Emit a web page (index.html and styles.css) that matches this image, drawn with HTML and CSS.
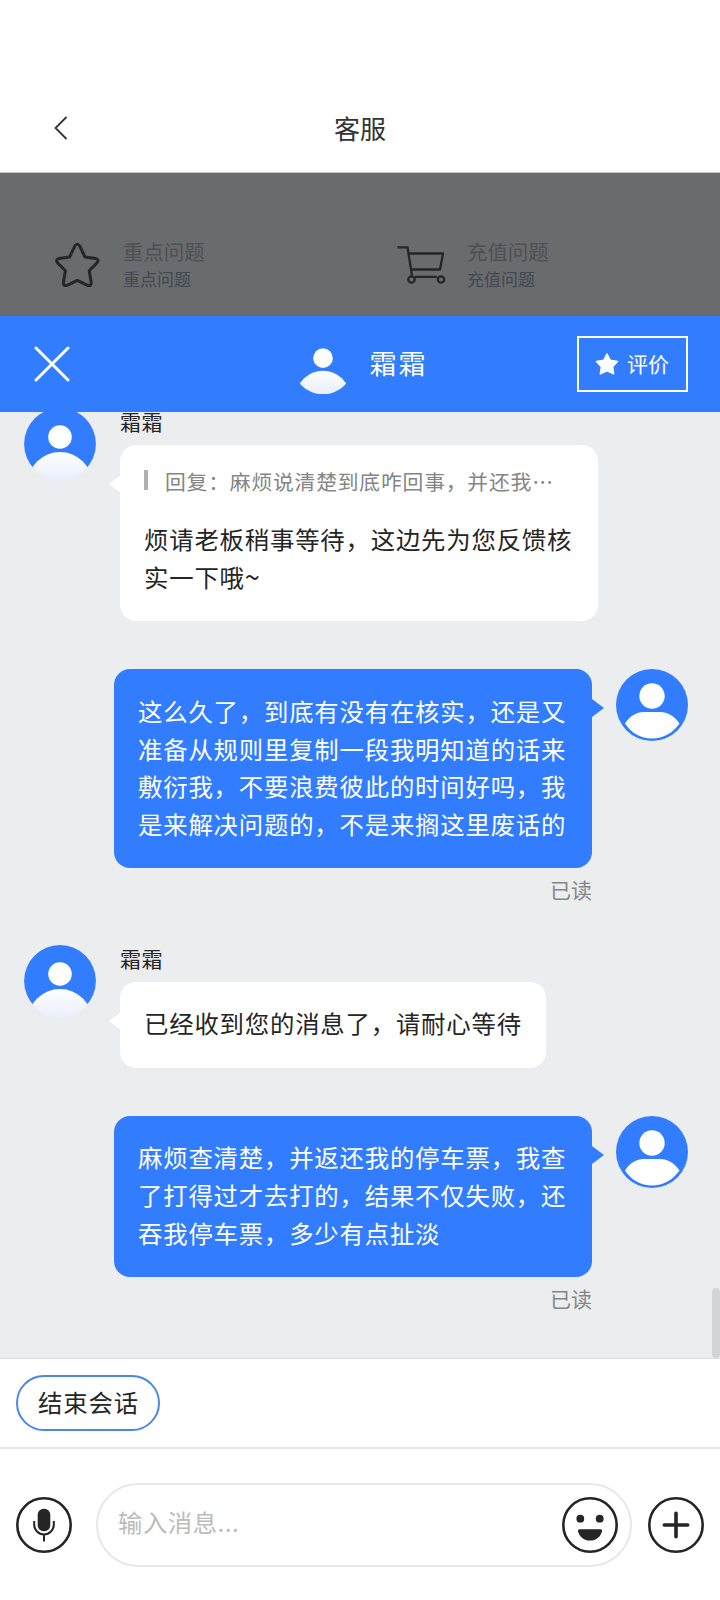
FILE: index.html
```html
<!DOCTYPE html>
<html lang="zh-CN">
<head>
<meta charset="utf-8">
<title>客服</title>
<link rel="stylesheet" href="styles.css">
</head>
<body>
<svg width="0" height="0" class="defs">
  <defs>
    <linearGradient id="body-fade" gradientUnits="userSpaceOnUse" x1="0" y1="46" x2="0" y2="72">
      <stop offset="0" stop-color="#fcfdff"/>
      <stop offset="1" stop-color="#e9effc"/>
    </linearGradient>
    <clipPath id="disc"><circle cx="36" cy="36" r="36.400"/></clipPath>
    <symbol id="agent" viewBox="0 0 72 72" overflow="visible">
      <circle cx="36" cy="35.900" r="35.900" fill="#327dff"/>
      <circle cx="36" cy="29" r="11.800" fill="#fff"/>
      <circle cx="36" cy="76.500" r="32.500" fill="url(#body-fade)" clip-path="url(#disc)"/>
    </symbol>
    <symbol id="user" viewBox="0 0 72 72">
      <circle cx="36" cy="36" r="36" fill="#327dff"/>
      <circle cx="36" cy="27" r="12.700" fill="#fff"/>
      <path d="M9 54.500C14 47 20 43 28 43H44C52 43 58 47 63.500 54.500C57 64 47 69.500 36 69.500S15 64 9 54.500Z" fill="#fff"/>
    </symbol>
  </defs>
</svg>
<div class="app">
  <header class="nav">
    <svg class="back" width="16" height="26" viewBox="0 0 16 26"><path d="M13.500 2L2.500 13L13.500 24" fill="none" stroke="#333" stroke-width="1.800"/></svg>
    <h1 class="nav-title">客服</h1>
  </header>

  <section class="topics">
    <div class="topic">
      <svg class="topic-icon" width="50" height="50" viewBox="0 0 50 50"><path d="M21.800 6.200Q24.300 2.500 26.800 6.200L32 17L42.500 18.500Q46.500 19.500 44 22.900L36.200 30.700L38.200 42.500Q38.300 46.500 34.500 45.300L24.300 40.300L14.100 45.300Q10.300 46.500 10.400 42.500L12.400 30.700L4.600 22.900Q2.100 19.500 6.100 18.500L16.600 17Z" fill="none" stroke="#252627" stroke-width="3" stroke-linejoin="round"/></svg>
      <div class="topic-text"><div class="topic-name">重点问题</div><div class="topic-sub">重点问题</div></div>
    </div>
    <div class="topic">
      <svg class="topic-icon" width="50" height="50" viewBox="0 0 50 50"><g fill="none" stroke="#252627" stroke-width="2.300" stroke-linejoin="round"><path d="M.5 7.300H10.500L15 35.500M11.500 13.500H46L43 29.500H14.200M18 36.800H40"/><circle cx="14.500" cy="39.500" r="3.200"/><circle cx="44" cy="39.500" r="3.200"/></g></svg>
      <div class="topic-text"><div class="topic-name">充值问题</div><div class="topic-sub">充值问题</div></div>
    </div>
  </section>

  <div class="agent-bar">
    <svg class="close" width="36" height="36" viewBox="0 0 36 36"><path d="M2 2L34 34M34 2L2 34" stroke="#fff" stroke-width="3" stroke-linecap="round"/></svg>
    <div class="agent">
      <svg width="60" height="60"><use href="#agent"/></svg>
      <span class="agent-name">霜霜</span>
    </div>
    <div class="rate">
      <svg width="24" height="24" viewBox="0 0 24 24"><path d="M12 2L15.200 8.300L22.500 9.500L17.500 14.700L18.600 21.800L12 18.800L5.400 21.800L6.500 14.700L1.500 9.500L8.800 8.300Z" fill="#fff" stroke="#fff" stroke-width="1.600" stroke-linejoin="round"/></svg>
      <span>评价</span>
    </div>
  </div>

  <main class="chat">
    <div class="row first">
      <svg class="avatar"><use href="#agent"/></svg>
      <div class="column">
        <div class="sender">霜霜</div>
        <div class="bubble in">
          <div class="quote"><span>回复：麻烦说清楚到底咋回事，并还我<span class="dots">⋯</span></span></div>
          烦请老板稍事等待，这边先为您反馈核<br>实一下哦<span class="wave">~</span>
        </div>
      </div>
    </div>
    <div class="row mine">
      <div class="column">
        <div class="bubble out">这么久了，到底有没有在核实，还是又<br>准备从规则里复制一段我明知道的话来<br>敷衍我，不要浪费彼此的时间好吗，我<br>是来解决问题的，不是来搁这里废话的</div>
        <div class="read">已读</div>
      </div>
      <svg class="avatar"><use href="#user"/></svg>
    </div>
    <div class="row">
      <svg class="avatar"><use href="#agent"/></svg>
      <div class="column">
        <div class="sender">霜霜</div>
        <div class="bubble in">已经收到您的消息了，请耐心等待</div>
      </div>
    </div>
    <div class="row mine">
      <div class="column">
        <div class="bubble out">麻烦查清楚，并返还我的停车票，我查<br>了打得过才去打的，结果不仅失败，还<br>吞我停车票，多少有点扯淡</div>
        <div class="read">已读</div>
      </div>
      <svg class="avatar"><use href="#user"/></svg>
    </div>
    <div class="thumb"></div>
  </main>

  <div class="quick"><div class="chip">结束会话</div></div>

  <footer class="composer">
    <svg width="56" height="56" viewBox="0 0 56 56"><circle cx="28" cy="28" r="26.700" fill="none" stroke="#252525" stroke-width="2.600"/><rect x="21.700" y="11.700" width="12.600" height="22.500" rx="6" fill="#252525"/><path d="M18.200 24V27.500A9.800 10 0 0 0 37.800 27.500V24M28 37.500V44.500" fill="none" stroke="#252525" stroke-width="2"/></svg>
    <div class="field">
      <span class="placeholder">输入消息...</span>
      <svg width="56" height="56" viewBox="0 0 56 56"><circle cx="28" cy="28" r="26.700" fill="none" stroke="#252525" stroke-width="2.600"/><circle cx="18.300" cy="21.700" r="3.900" fill="#252525"/><circle cx="37.700" cy="21.700" r="3.900" fill="#252525"/><path d="M17.500 32.200H38.500Q40.500 32.200 40 34.200C38.500 40 34 43.600 28 43.600S17.500 40 16 34.200Q15.500 32.200 17.500 32.200Z" fill="#252525"/></svg>
    </div>
    <svg width="56" height="56" viewBox="0 0 56 56"><circle cx="28" cy="28" r="26.700" fill="none" stroke="#252525" stroke-width="2.600"/><path d="M16.300 28H39.700M28 16.300V39.700" stroke="#252525" stroke-width="3.600" stroke-linecap="round"/></svg>
  </footer>
</div>
</body>
</html>
```

FILE: styles.css
```css
* { box-sizing: border-box; }
body { margin: 0; font-family: "Noto Sans CJK SC", "Noto Sans", sans-serif; color: #252525; }
svg { flex: none; display: block; }
.defs { position: absolute; }
.app { width: 720px; height: 1600px; display: flex; flex-direction: column; background: #fff; overflow: hidden; }

.nav { height: 173px; padding: 85px 0 0 53px; display: flex; align-items: center; border-bottom: 1px solid #c4c4c4; }
.nav-title { flex: 1; margin: 0 69px 2px 0; text-align: center; font-size: 26px; font-weight: 400; line-height: 36px; color: #333; }
.back { margin-bottom: 1px; }

.topics { height: 143px; background: #6a6b6d; display: grid; grid-template-columns: 344px 1fr; padding: 65px 0 0 53px; }
.topic { display: flex; gap: 20px; }
.topic-icon { margin-top: 2px; }
.topic-name { font-size: 20.400px; line-height: 26px; color: #4d4f54; }
.topic-sub { font-size: 17px; line-height: 24px; margin-top: 3px; color: #414754; }

.agent-bar { height: 96px; background: #327dff; color: #fff; display: flex; align-items: center; justify-content: space-between; padding: 0 32px 0 34px; flex: none; }
.agent { display: flex; align-items: center; gap: 17px; margin-left: 73px; }
.agent-name { font-size: 27px; letter-spacing: 2px; line-height: 40px; margin-bottom: 3px; }
.rate { width: 111px; height: 56px; border: 2px solid #fff; display: flex; align-items: center; gap: 8px; padding-left: 16px; font-size: 21px; }
.rate span { margin-bottom: 3px; }

.chat { height: 946px; flex: none; background: #ebedef; position: relative; overflow: hidden; display: flex; flex-direction: column; gap: 48px; }
.row { display: flex; gap: 24px; padding: 0 32px 0 24px; align-items: flex-start; }
.row.first { margin-top: -4.500px; }
.mine { justify-content: flex-end; }
.avatar { width: 72px; height: 72px; overflow: visible; }
.sender { height: 37px; font-size: 21px; line-height: 26px; letter-spacing: .5px; }
.bubble { position: relative; width: fit-content; padding: 22.500px 24px 25.500px; border-radius: 16px; font-size: 24.400px; letter-spacing: .8px; line-height: 37.800px; white-space: nowrap; }
.in { background: #fff; }
.out { background: #327dff; color: #fff; width: 478.500px; padding-left: 24.500px; }
.in::before, .out::after { content: ""; position: absolute; border: 9.500px solid transparent; }
.in::before { left: -11.500px; top: 30.500px; border-left: 0; border-right: 12px solid #fff; }
.out::after { right: -11.500px; top: 30px; border-right: 0; border-left: 12px solid #327dff; }
.first .bubble { width: 478px; }
.quote { display: flex; height: 53.200px; font-size: 20.800px; letter-spacing: .8px; line-height: 28px; color: #858585; }
.quote::before { content: ""; width: 4px; height: 20px; margin: 2.500px 17px 0 0; background: #b0b0b0; }
.dots { letter-spacing: 0; }
.wave { font-size: 27px; line-height: 20px; }
.read { height: 28.500px; padding-top: 7px; text-align: right; font-size: 21px; line-height: 29px; color: #858585; }
.thumb { position: absolute; right: 0; bottom: 0; width: 8px; height: 70px; border-radius: 4px; background: #d3d4d6; }

.quick { height: 91px; flex: none; border-top: 1px solid #dcddde; border-bottom: 2px solid #e6e6e6; padding: 16px; }
.chip { width: 144px; height: 56px; border: 2px solid #4a86ee; border-radius: 28px; text-align: center; font-size: 24.400px; letter-spacing: .8px; line-height: 50px; padding-left: 1px; }
.composer { height: 151px; display: flex; gap: 16px; padding: 34px 16px 0; align-items: flex-start; }
.composer > svg { margin-top: 14px; }
.field { flex: 1; height: 84px; margin-left: 8px; padding: 0 12px 0 20px; border: 2px solid #e8e8e8; border-radius: 42px; display: flex; align-items: center; justify-content: space-between; }
.placeholder { font-size: 24.400px; letter-spacing: .5px; line-height: 36px; margin-bottom: 6px; color: #bcbcbc; }
```
